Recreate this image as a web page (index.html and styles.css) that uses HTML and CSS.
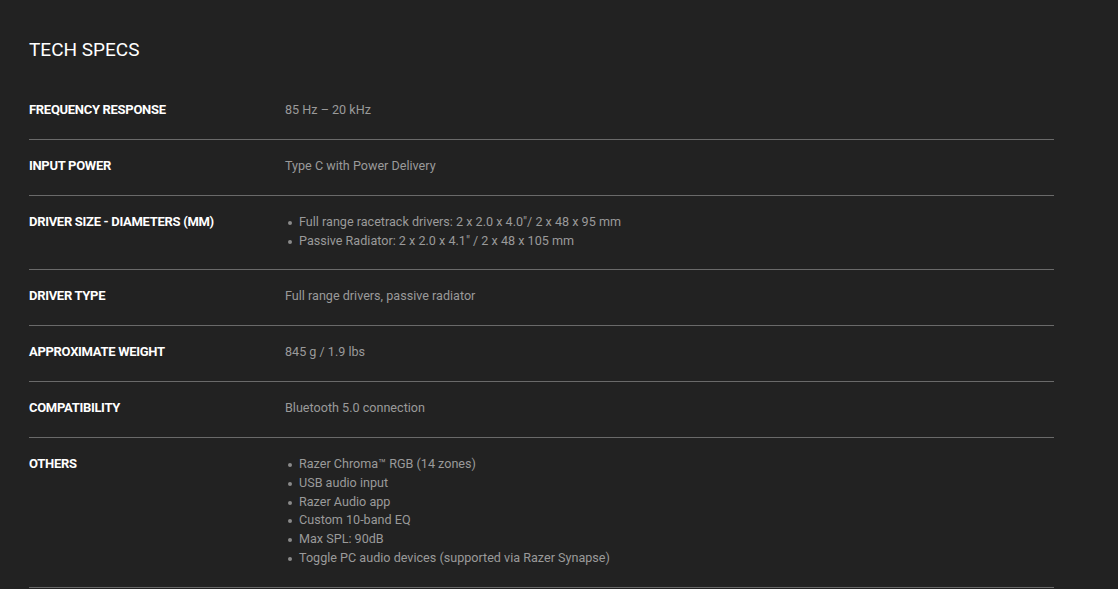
FILE: index.html
```html
<!DOCTYPE html>
<html lang="en">
<head>
<meta charset="utf-8">
<title>Tech Specs</title>
<link rel="stylesheet" href="styles.css">
</head>
<body>
<section class="specs">
  <h2 class="specs-title">TECH SPECS</h2>
  <div class="spec-list">
    <div class="spec-row">
      <div class="spec-label">FREQUENCY RESPONSE</div>
      <div class="spec-value">85 Hz – 20 kHz</div>
    </div>
    <div class="spec-row">
      <div class="spec-label">INPUT POWER</div>
      <div class="spec-value">Type C with Power Delivery</div>
    </div>
    <div class="spec-row">
      <div class="spec-label">DRIVER SIZE - DIAMETERS (MM)</div>
      <div class="spec-value">
        <ul class="spec-bullets">
          <li>Full range racetrack drivers: 2 x 2.0 x 4.0"/ 2 x 48 x 95 mm</li>
          <li>Passive Radiator: 2 x 2.0 x 4.1" / 2 x 48 x 105 mm</li>
        </ul>
      </div>
    </div>
    <div class="spec-row">
      <div class="spec-label">DRIVER TYPE</div>
      <div class="spec-value">Full range drivers, passive radiator</div>
    </div>
    <div class="spec-row">
      <div class="spec-label">APPROXIMATE WEIGHT</div>
      <div class="spec-value">845 g / 1.9 lbs</div>
    </div>
    <div class="spec-row">
      <div class="spec-label">COMPATIBILITY</div>
      <div class="spec-value">Bluetooth 5.0 connection</div>
    </div>
    <div class="spec-row">
      <div class="spec-label">OTHERS</div>
      <div class="spec-value">
        <ul class="spec-bullets">
          <li>Razer Chroma™ RGB (14 zones)</li>
          <li>USB audio input</li>
          <li>Razer Audio app</li>
          <li>Custom 10-band EQ</li>
          <li>Max SPL: 90dB</li>
          <li>Toggle PC audio devices (supported via Razer Synapse)</li>
        </ul>
      </div>
    </div>
  </div>
</section>
</body>
</html>
```
FILE: styles.css
```css
html, body {
  margin: 0;
  padding: 0;
  background: #222222;
}
body {
  font-family: Roboto, "Liberation Sans", Arial, sans-serif;
  color: #999999;
}
.specs {
  width: 1025px;
  padding: 37px 0 0 29px;
}
.specs-title {
  margin: 0 0 21px;
  font-size: 19px;
  font-weight: 400;
  line-height: 26px;
  color: #ffffff;
}
.spec-list {
  display: flex;
  flex-direction: column;
}
.spec-row {
  display: grid;
  grid-template-columns: 256px 1fr;
  padding: 17px 0 19px;
  border-bottom: 1px solid #6a6a6a;
  font-size: 13px;
  line-height: 18.85px;
}
.spec-label {
  font-weight: 700;
  color: #ffffff;
  letter-spacing: -0.3px;
}
.spec-value {
  color: #9a9a9a;
  font-size: 12.6px;
}
.spec-bullets {
  margin: 0;
  padding: 0 0 0 14px;
  list-style: none;
}
.spec-bullets li {
  position: relative;
}
.spec-bullets li::before {
  content: "";
  position: absolute;
  left: -11px;
  top: 8px;
  width: 4px;
  height: 4px;
  border-radius: 50%;
  background: #8a8a8a;
}
```
